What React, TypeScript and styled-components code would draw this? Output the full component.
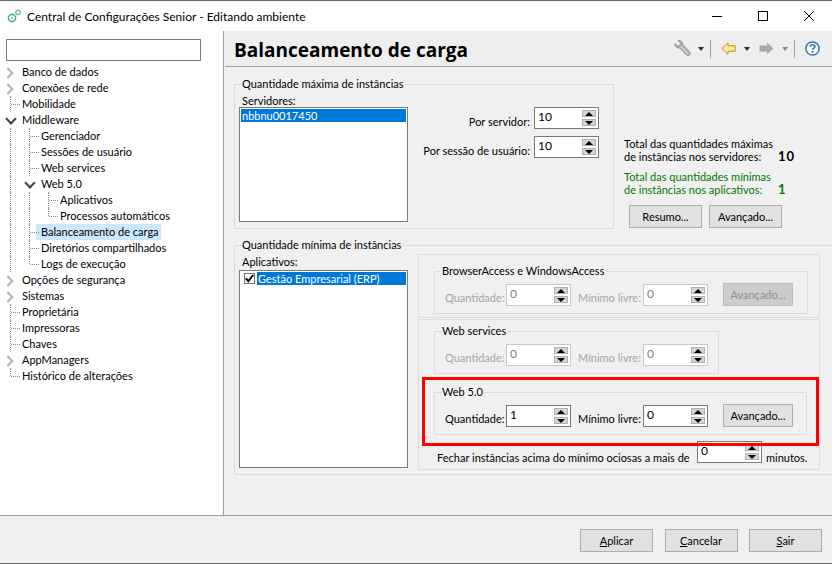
import * as React from "react";
import { createGlobalStyle, styled } from "styled-components";

type Guide = "none" | "pipe" | "tee" | "ell" | "closed" | "open";

interface TreeItem {
  label: string;
  guides: Guide[];
  selected?: boolean;
}

const treeItems: TreeItem[] = [
  { label: "Banco de dados", guides: ["closed"] },
  { label: "Conexões de rede", guides: ["closed"] },
  { label: "Mobilidade", guides: ["tee"] },
  { label: "Middleware", guides: ["open"] },
  { label: "Gerenciador", guides: ["pipe", "tee"] },
  { label: "Sessões de usuário", guides: ["pipe", "tee"] },
  { label: "Web services", guides: ["pipe", "tee"] },
  { label: "Web 5.0", guides: ["pipe", "open"] },
  { label: "Aplicativos", guides: ["pipe", "pipe", "tee"] },
  { label: "Processos automáticos", guides: ["pipe", "pipe", "ell"] },
  { label: "Balanceamento de carga", guides: ["pipe", "tee"], selected: true },
  { label: "Diretórios compartilhados", guides: ["pipe", "tee"] },
  { label: "Logs de execução", guides: ["pipe", "ell"] },
  { label: "Opções de segurança", guides: ["closed"] },
  { label: "Sistemas", guides: ["closed"] },
  { label: "Proprietária", guides: ["tee"] },
  { label: "Impressoras", guides: ["tee"] },
  { label: "Chaves", guides: ["tee"] },
  { label: "AppManagers", guides: ["closed"] },
  { label: "Histórico de alterações", guides: ["ell"] },
];

const GearsIcon = () => (
  <svg width="14" height="14" viewBox="0 0 14 14" fill="none">
    <circle cx="5" cy="9" r="3.6" stroke="#4fae9f" strokeWidth="1.6" />
    <circle cx="5" cy="9" r="1.1" fill="#7cc8bb" />
    <circle cx="11" cy="3.4" r="2.3" stroke="#6cbcae" strokeWidth="1.3" />
  </svg>
);

const WrenchIcon = () => (
  <svg width="17" height="17" viewBox="0 0 17 17">
    <path
      d="M1 3.5 L3.5 6 L6 5.5 L6.5 3 L4 .8 C6.5 -.2 9 1.5 8.8 4.6 L15.8 12 C16.6 13 16.4 14.2 15.6 15 C14.7 15.9 13.4 15.9 12.6 15 L5.6 8 C2.6 8.4 .4 6.2 1 3.5 Z"
      fill="#b4b4b4"
      stroke="#8c8c8c"
      strokeWidth=".8"
    />
    <path d="M7 6.5 L14 14" stroke="#e4e4e4" strokeWidth="1" />
  </svg>
);

const BackIcon = () => (
  <svg width="15" height="13" viewBox="0 0 15 13">
    <path
      d="M.8 6.5 L7 .8 V3.8 H14.2 V9.2 H7 V12.2 Z"
      fill="#ffe9a8"
      stroke="#c98a10"
      strokeWidth="1"
    />
  </svg>
);

const ForwardIcon = () => (
  <svg width="15" height="13" viewBox="0 0 15 13">
    <path d="M14.5 6.5 L8 .5 V3.5 H.5 V9.5 H8 V12.5 Z" fill="#a8a8a8" />
  </svg>
);

const HelpIcon = () => (
  <svg width="15" height="15" viewBox="0 0 15 15">
    <circle cx="7.5" cy="7.5" r="6.6" fill="#fff" stroke="#2e78b8" strokeWidth="1.5" />
    <path
      d="M5.2 5.8 C5.2 3.2 9.9 3.2 9.9 5.6 C9.9 7.2 7.6 7.2 7.6 9"
      fill="none"
      stroke="#2e78b8"
      strokeWidth="1.6"
    />
    <rect x="6.7" y="10" width="1.8" height="1.8" fill="#2e78b8" />
  </svg>
);

const MinimizeIcon = () => (
  <svg width="10" height="10" viewBox="0 0 10 10">
    <path d="M0 5.5 H10" stroke="#000" strokeWidth="1" />
  </svg>
);

const MaximizeIcon = () => (
  <svg width="10" height="10" viewBox="0 0 10 10">
    <rect x=".5" y=".5" width="9" height="9" fill="none" stroke="#000" strokeWidth="1" />
  </svg>
);

const CloseIcon = () => (
  <svg width="10" height="10" viewBox="0 0 10 10">
    <path d="M0 0 L10 10 M10 0 L0 10" stroke="#000" strokeWidth="1" />
  </svg>
);

const Spin: React.FC<{ value: string; disabled?: boolean }> = ({ value, disabled }) => (
  <SpinBox $disabled={disabled}>
    <SpinValue $disabled={disabled}>{value}</SpinValue>
    <SpinButtons>
      <SpinButton $up />
      <SpinButton />
    </SpinButtons>
  </SpinBox>
);

const InstanceRow: React.FC<{ quantity: string; free: string; disabled?: boolean; advanced?: boolean }> = ({
  quantity,
  free,
  disabled,
  advanced = true,
}) => (
  <Row>
    <FieldLabel $width={57} $disabled={disabled}>Quantidade:</FieldLabel>
    <Spin value={quantity} disabled={disabled} />
    <FieldLabel $width={61} $gap={7} $disabled={disabled}>Mínimo livre:</FieldLabel>
    <Spin value={free} disabled={disabled} />
    {advanced && <RowButton disabled={disabled}>Avançado...</RowButton>}
  </Row>
);

export default function App() {
  return (
    <Window>
      <GlobalStyle />
      <TitleBar>
        <GearsIcon />
        <Title>Central de Configurações Senior - Editando ambiente</Title>
        <WindowControls>
          <ControlSlot><MinimizeIcon /></ControlSlot>
          <ControlSlot><MaximizeIcon /></ControlSlot>
          <ControlSlot><CloseIcon /></ControlSlot>
        </WindowControls>
      </TitleBar>

      <Main>
        <Sidebar>
          <SearchInput />
          <Tree>
            {treeItems.map((item) => (
              <TreeRow key={item.label}>
                {item.guides.map((guide, i) => (
                  <GuideCell key={i} $kind={guide} />
                ))}
                <TreeLabel $selected={item.selected}>{item.label}</TreeLabel>
              </TreeRow>
            ))}
          </Tree>
        </Sidebar>

        <Content>
          <Header>
            <Heading>Balanceamento de carga</Heading>
            <Toolbar>
              <WrenchIcon />
              <Caret $left={7} />
              <ToolSeparator />
              <BackIcon />
              <Caret $left={8} />
              <ToolForward><ForwardIcon /></ToolForward>
              <Caret $left={8} $muted />
              <ToolSeparator />
              <HelpIcon />
            </Toolbar>
          </Header>

          <Body>
            <TopSection>
              <MaxGroup>
                <GroupLegend>Quantidade máxima de instâncias</GroupLegend>
                <MaxInner>
                  <ListColumn>
                    <ListCaption>Servidores:</ListCaption>
                    <ListBox $height={115}>
                      <ListRow>nbbnu0017450</ListRow>
                    </ListBox>
                  </ListColumn>
                  <PerColumn>
                    <PerRow>
                      <PerLabel>Por servidor:</PerLabel>
                      <Spin value="10" />
                    </PerRow>
                    <PerRow>
                      <PerLabel>Por sessão de usuário:</PerLabel>
                      <Spin value="10" />
                    </PerRow>
                  </PerColumn>
                </MaxInner>
              </MaxGroup>

              <Totals>
                <TotalRow>
                  <TotalText>
                    Total das quantidades máximas
                    <br />
                    de instâncias nos servidores:
                  </TotalText>
                  <TotalNumber>10</TotalNumber>
                </TotalRow>
                <TotalRow $green>
                  <TotalText>
                    Total das quantidades mínimas
                    <br />
                    de instâncias nos aplicativos:
                  </TotalText>
                  <TotalNumber>1</TotalNumber>
                </TotalRow>
                <TotalButtons>
                  <PushButton>Resumo...</PushButton>
                  <PushButton>Avançado...</PushButton>
                </TotalButtons>
              </Totals>
            </TopSection>

            <MinGroup>
              <GroupLegend>Quantidade mínima de instâncias</GroupLegend>
              <MinInner>
                <ListColumn>
                  <ListCaption $gap={2}>Aplicativos:</ListCaption>
                  <ListBox $height={198}>
                    <CheckRow>
                      <CheckBox>
                        <svg width="9" height="9" viewBox="0 0 9 9">
                          <path d="M.8 4.4 L3.3 7.2 L8.2 1" fill="none" stroke="#000" strokeWidth="2" />
                        </svg>
                      </CheckBox>
                      <ListRow $inset>Gestão Empresarial (ERP)</ListRow>
                    </CheckRow>
                  </ListBox>
                </ListColumn>

                <PanelColumn>
                  <BrowserPanel>
                    <SubGroup>
                      <GroupLegend>BrowserAccess e WindowsAccess</GroupLegend>
                      <InstanceRow quantity="0" free="0" disabled />
                    </SubGroup>
                  </BrowserPanel>

                  <WebPanel>
                    <ServicesGroup>
                      <GroupLegend>Web services</GroupLegend>
                      <InstanceRow quantity="0" free="0" disabled advanced={false} />
                    </ServicesGroup>

                    <Highlight>
                      <SubGroup>
                        <GroupLegend>Web 5.0</GroupLegend>
                        <InstanceRow quantity="1" free="0" />
                      </SubGroup>
                    </Highlight>

                    <IdleRow>
                      <IdleText $width={256}>Fechar instâncias acima do mínimo ociosas a mais de</IdleText>
                      <Spin value="0" />
                      <IdleText>minutos.</IdleText>
                    </IdleRow>
                  </WebPanel>
                </PanelColumn>
              </MinInner>
            </MinGroup>
          </Body>
        </Content>
      </Main>

      <Footer>
        <PushButton><u>A</u>plicar</PushButton>
        <PushButton><u>C</u>ancelar</PushButton>
        <PushButton><u>S</u>air</PushButton>
      </Footer>
    </Window>
  );
}

const GlobalStyle = createGlobalStyle`
  html, body {
    margin: 0;
    padding: 0;
    overflow: hidden;
  }

  body {
    font-family: Lato, "Liberation Sans", sans-serif;
    font-size: 11px;
    color: #000;
  }

  * {
    box-sizing: border-box;
  }
`;

const Window = styled.div`
  width: 832px;
  height: 564px;
  display: flex;
  flex-direction: column;
  background: #f0f0f0;
  border-top: 1px solid #6b6b6b;
  border-bottom: 1px solid #6b6b6b;
`;

const TitleBar = styled.div`
  height: 30px;
  flex: none;
  background: #fff;
  display: flex;
  align-items: center;
  padding-left: 7px;
`;

const Title = styled.div`
  margin-left: 6px;
  font-size: 12px;
  white-space: nowrap;
`;

const WindowControls = styled.div`
  margin-left: auto;
  display: flex;
`;

const ControlSlot = styled.div`
  width: 46px;
  height: 30px;
  display: flex;
  align-items: center;
  justify-content: center;
`;

const Main = styled.div`
  flex: 1;
  display: flex;
  min-height: 0;
  border-bottom: 1px solid #a0a0a0;
`;

const Sidebar = styled.div`
  width: 224px;
  flex: none;
  background: #fff;
  border-right: 1px solid #a0a0a0;
  padding: 8px 0 0 6px;
`;

const SearchInput = styled.div`
  width: 195px;
  height: 22px;
  border: 1px solid #7a7a7a;
  background: #fff;
`;

const Tree = styled.div`
  margin: 3px 0 0 -5px;
`;

const TreeRow = styled.div`
  height: 16px;
  display: flex;
  align-items: stretch;
`;

const GuideCell = styled.span<{ $kind: Guide }>`
  position: relative;
  width: 19px;
  flex: none;

  &::before {
    content: "";
    position: absolute;
    left: 9px;
    top: 0;
    bottom: ${({ $kind }) => ($kind === "ell" ? "8px" : "0")};
    display: ${({ $kind }) => (["pipe", "tee", "ell"].includes($kind) ? "block" : "none")};
    border-left: 1px dotted #8a8a8a;
  }

  &::after {
    content: "";
    position: absolute;
    ${({ $kind }) =>
      $kind === "closed"
        ? `left: 3px; top: 5px; width: 6px; height: 6px; border-top: 2px solid #b4b4b4; border-right: 2px solid #b4b4b4; transform: rotate(45deg);`
        : $kind === "open"
          ? `left: 6px; top: 3px; width: 6px; height: 6px; border-bottom: 2px solid #404040; border-right: 2px solid #404040; transform: rotate(45deg);`
          : ["tee", "ell"].includes($kind)
            ? `left: 10px; top: 8px; width: 9px; border-top: 1px dotted #8a8a8a;`
            : `display: none;`}
  }
`;

const TreeLabel = styled.span<{ $selected?: boolean }>`
  margin-left: ${({ $selected }) => ($selected ? "-3px" : "2px")};
  padding: ${({ $selected }) => ($selected ? "0 2px 0 5px" : "0")};
  line-height: 16px;
  white-space: nowrap;
  background: ${({ $selected }) => ($selected ? "#cce8ff" : "transparent")};
`;

const Content = styled.div`
  flex: 1;
  min-width: 0;
  display: flex;
  flex-direction: column;
  margin-left: 1px;
`;

const Header = styled.div`
  height: 36px;
  flex: none;
  display: flex;
  align-items: center;
  padding: 0 12px 0 9px;
  background: #eeeeee;
  border-bottom: 1px solid #a6a6a6;
`;

const Heading = styled.h1`
  margin: 3px 0 0;
  font-family: "Open Sans", sans-serif;
  font-size: 19px;
  font-weight: 700;
  white-space: nowrap;
`;

const Toolbar = styled.div`
  margin-left: auto;
  display: flex;
  align-items: center;
`;

const Caret = styled.span<{ $left: number; $muted?: boolean }>`
  margin-left: ${({ $left }) => $left}px;
  width: 0;
  height: 0;
  border-left: 3.5px solid transparent;
  border-right: 3.5px solid transparent;
  border-top: 4px solid ${({ $muted }) => ($muted ? "#8a8a8a" : "#303030")};
`;

const ToolSeparator = styled.span`
  width: 1px;
  height: 18px;
  background: #a0a0a0;
  margin: 0 10px 0 6px;
`;

const ToolForward = styled.span`
  display: flex;
  margin-left: 9px;
`;

const Body = styled.div`
  flex: 1;
  padding: 10px 0 0 9px;
  display: flex;
  flex-direction: column;
`;

const TopSection = styled.div`
  height: 152px;
  flex: none;
  display: flex;
  align-items: flex-start;
`;

const Group = styled.fieldset`
  margin: 0;
  padding: 0;
  min-width: 0;
  border: 1px solid #dcdcdc;
`;

const GroupLegend = styled.legend`
  margin-left: 7px;
  padding: 0 1px 0 0;
  line-height: 14px;
  white-space: nowrap;
`;

const MaxGroup = styled(Group)`
  width: 380px;
  height: 152px;
`;

const MaxInner = styled.div`
  display: flex;
  padding: 3px 0 0 4px;
`;

const ListColumn = styled.div`
  width: 169px;
  flex: none;
`;

const ListCaption = styled.div<{ $gap?: number }>`
  height: 13px;
  line-height: 13px;
  padding-left: 3px;
  margin-bottom: ${({ $gap }) => $gap ?? 0}px;
`;

const ListBox = styled.div<{ $height: number }>`
  height: ${({ $height }) => $height}px;
  background: #fff;
  border: 1px solid #7a7a7a;
  padding: 1px;
`;

const ListRow = styled.div<{ $inset?: boolean }>`
  flex: ${({ $inset }) => ($inset ? 1 : "none")};
  height: 13px;
  line-height: 13px;
  padding-left: 1px;
  color: #fff;
  background: #0078d7;
  white-space: nowrap;
  overflow: hidden;
`;

const CheckRow = styled.div`
  display: flex;
  padding-left: 3px;
`;

const CheckBox = styled.span`
  width: 11px;
  height: 11px;
  margin: 1px 2px 0 0;
  border: 1px solid #6b6b6b;
  background: #fff;
  display: flex;
  align-items: center;
  justify-content: center;
`;

const PerColumn = styled.div`
  width: 191px;
  margin-top: 13px;
  display: flex;
  flex-direction: column;
  gap: 7px;
`;

const PerRow = styled.div`
  display: flex;
  justify-content: flex-end;
`;

const PerLabel = styled.span`
  margin: 8px 4px 0 0;
  white-space: nowrap;
  line-height: 14px;
`;

const SpinBox = styled.div<{ $disabled?: boolean }>`
  position: relative;
  width: 65px;
  height: 22px;
  flex: none;
  background: #fff;
  border: 1px solid ${({ $disabled }) => ($disabled ? "#c8c8c8" : "#7a7a7a")};
`;

const SpinValue = styled.span<{ $disabled?: boolean }>`
  display: block;
  padding: 2px 0 0 3px;
  line-height: 14px;
  font-size: 12px;
  color: ${({ $disabled }) => ($disabled ? "#808080" : "#000")};
`;

const SpinButtons = styled.div`
  position: absolute;
  top: 2px;
  right: 2px;
  width: 14px;
  display: flex;
  flex-direction: column;
  gap: 2px;
`;

const SpinButton = styled.span<{ $up?: boolean }>`
  height: 7px;
  background: #d4d4d4;
  border: 1px solid #b0b0b0;
  display: flex;
  align-items: center;
  justify-content: center;

  &::before {
    content: "";
    width: 0;
    height: 0;
    border-left: 4px solid transparent;
    border-right: 4px solid transparent;
    ${({ $up }) => ($up ? "border-bottom: 4px solid #000;" : "border-top: 4px solid #000;")}
  }
`;

const Totals = styled.div`
  margin-left: 10px;
  padding-top: 60px;
`;

const TotalRow = styled.div<{ $green?: boolean }>`
  display: flex;
  align-items: flex-end;
  color: ${({ $green }) => ($green ? "#007a00" : "#000")};
  margin-bottom: 7px;
`;

const TotalText = styled.div`
  width: 154px;
  line-height: 13px;
  white-space: nowrap;
`;

const TotalNumber = styled.div`
  font-size: 13px;
  font-weight: 700;
  letter-spacing: 1px;
  line-height: 13px;
`;

const TotalButtons = styled.div`
  margin: 9px 0 0 5px;
  display: flex;
  gap: 7px;
`;

const PushButton = styled.button`
  width: 73px;
  height: 23px;
  padding: 0;
  font: inherit;
  color: #000;
  background: #e1e1e1;
  border: 1px solid #adadad;
  border-radius: 0;
`;

const MinGroup = styled(Group)`
  margin-top: 9px;
  height: 237px;
  border-right: none;
`;

const MinInner = styled.div`
  display: flex;
  align-items: flex-start;
  padding: 3px 0 0 4px;
`;

const PanelColumn = styled.div`
  margin: -1px 0 0 10px;
  width: 402px;
  display: flex;
  flex-direction: column;
  gap: 1px;
`;

const BrowserPanel = styled.div`
  height: 64px;
  padding: 9px 11px 0 15px;
  border: 1px solid #dcdcdc;
`;

const WebPanel = styled.div`
  height: 151px;
  padding: 4px 0 0 3px;
  border: 1px solid #dcdcdc;
`;

const SubGroup = styled(Group)`
  height: 50px;
`;

const ServicesGroup = styled(SubGroup)`
  margin-left: 12px;
  width: 285px;
`;

const Highlight = styled.div`
  position: relative;
  z-index: 1;
  width: 397px;
  margin-top: 3px;
  padding: 5px 9px 8px 9px;
  border: 3px solid #ff0000;
`;

const Row = styled.div`
  display: flex;
  align-items: flex-start;
  padding: 6px 0 0 10px;
`;

const FieldLabel = styled.span<{ $width: number; $gap?: number; $disabled?: boolean }>`
  width: ${({ $width }) => $width}px;
  margin: 7px 4px 0 ${({ $gap }) => $gap ?? 0}px;
  line-height: 14px;
  white-space: nowrap;
  color: ${({ $disabled }) => ($disabled ? "#a6a6a6" : "#000")};
`;

const RowButton = styled.button`
  width: 70px;
  height: 23px;
  margin: -1px 0 0 15px;
  padding: 0;
  font: inherit;
  color: #000;
  background: #e1e1e1;
  border: 1px solid #adadad;

  &:disabled {
    color: #8f8f8f;
    background: #cccccc;
    border-color: #bfbfbf;
  }
`;

const IdleRow = styled.div`
  margin: -5px 0 0 15px;
  display: flex;
  align-items: flex-start;
  gap: 4px;
`;

const IdleText = styled.span<{ $width?: number }>`
  margin-top: 10px;
  line-height: 14px;
  white-space: nowrap;
  width: ${({ $width }) => ($width ? `${$width}px` : "auto")};
`;

const Footer = styled.div`
  height: 47px;
  flex: none;
  display: flex;
  justify-content: flex-end;
  gap: 11.5px;
  padding: 13px 10px 0 0;
`;
